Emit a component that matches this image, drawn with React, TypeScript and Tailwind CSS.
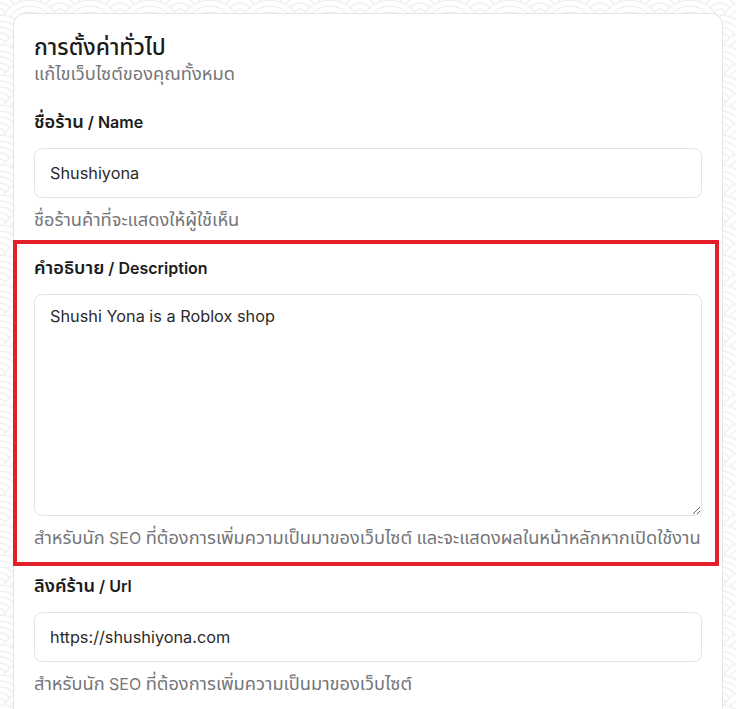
import React from 'react';

const font = { fontFamily: 'Inter, "Noto Sans", "Noto Sans Thai", "Noto Sans Thai UI", sans-serif' };

// Thai runs are drawn a bit larger to match the reference's Thai face
const th = (text: string) =>
    text.split(/([\u0E00-\u0E7F]+)/).map((part, i) =>
        /[\u0E00-\u0E7F]/.test(part) ? (
            <span key={i} className="text-[1.14em] leading-none">{part}</span>
        ) : (
            part
        )
    );

const Rings = ({ cx, cy }: { cx: number; cy: number }) => (
    <g>
        {[30, 24, 18, 12, 6].map((r) => (
            <circle key={r} cx={cx} cy={cy} r={r} fill="#ffffff" stroke="#f1f1f1" strokeWidth="1.5" />
        ))}
    </g>
);

const WaveBackground = () => (
    <svg className="absolute inset-0 w-full h-full" xmlns="http://www.w3.org/2000/svg">
        <defs>
            <pattern id="seigaiha" width="60" height="30" patternUnits="userSpaceOnUse">
                <Rings cx={0} cy={-15} />
                <Rings cx={60} cy={-15} />
                <Rings cx={30} cy={0} />
                <Rings cx={0} cy={15} />
                <Rings cx={60} cy={15} />
                <Rings cx={30} cy={30} />
                <Rings cx={0} cy={45} />
                <Rings cx={60} cy={45} />
            </pattern>
        </defs>
        <rect width="100%" height="100%" fill="url(#seigaiha)" />
    </svg>
);

const Field = ({ label, helper, children, highlight }: { label: string; helper: string; children: React.ReactNode; highlight?: boolean }) => (
    <div className="relative">
        {highlight && (
            <div className="absolute -top-4 -bottom-4 -left-[21px] -right-[17px] border-4 border-[#e3202a] pointer-events-none" />
        )}
        <label className="block text-base leading-6 font-semibold text-[#1c1c1c]">{th(label)}</label>
        <div className="mt-3.5">{children}</div>
        <p className="mt-2.5 text-base leading-6 text-[#75757a] whitespace-nowrap">{th(helper)}</p>
    </div>
);

export default function App() {
    return (
        <div className="relative min-h-screen bg-white p-[13px]" style={font}>
            <WaveBackground />
            <div className="relative bg-white border border-[#e4e4e7] rounded-xl px-5 pt-5 pb-6">
                <h2 className="text-xl leading-7 font-medium text-[#1c1c1c]">{th('การตั้งค่าทั่วไป')}</h2>
                <p className="text-base leading-6 text-[#75757a]">{th('แก้ไขเว็บไซต์ของคุณทั้งหมด')}</p>

                <div className="mt-6 flex flex-col gap-6">
                    <Field label="ชื่อร้าน / Name" helper="ชื่อร้านค้าที่จะแสดงให้ผู้ใช้เห็น">
                        <input
                            defaultValue="Shushiyona"
                            className="w-full h-[50px] px-[15px] rounded-lg border border-[#e4e4e7] bg-white text-[16.3px] text-[#2a2a2a] outline-none"
                        />
                    </Field>

                    <Field
                        highlight
                        label="คำอธิบาย / Description"
                        helper="สำหรับนัก SEO ที่ต้องการเพิ่มความเป็นมาของเว็บไซต์ และจะแสดงผลในหน้าหลักหากเปิดใช้งาน"
                    >
                        <textarea
                            defaultValue="Shushi Yona is a Roblox shop"
                            className="block w-full h-[222px] px-[15px] py-[9px] rounded-lg border border-[#e4e4e7] bg-white text-[16.3px] leading-6 text-[#2a2a2a] outline-none resize-y"
                        />
                    </Field>

                    <Field label="ลิงค์ร้าน / Url" helper="สำหรับนัก SEO ที่ต้องการเพิ่มความเป็นมาของเว็บไซต์">
                        <input
                            defaultValue="https://shushiyona.com"
                            className="w-full h-[50px] px-[15px] rounded-lg border border-[#e4e4e7] bg-white text-[16.3px] text-[#2a2a2a] outline-none"
                        />
                    </Field>
                </div>
            </div>
        </div>
    );
}
